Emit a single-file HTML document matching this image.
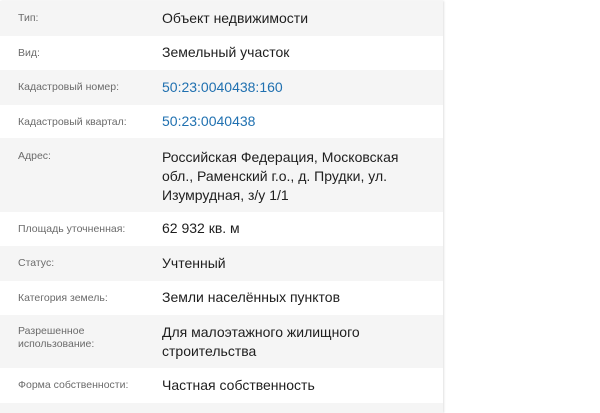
<!DOCTYPE html>
<html><head><meta charset="utf-8"><style>
body{margin:0;width:600px;height:410px;background:#fff;overflow:hidden;font-family:"Liberation Sans","DejaVu Sans",sans-serif}
.wrap{position:absolute;left:0;top:1px;width:443px;box-shadow:1px 0 2px rgba(0,0,0,.12)}
.r{position:relative;box-sizing:border-box}
.g{background:#f5f5f5}
.l{position:absolute;left:18px;font-size:10.5px;color:#6b6b6b;line-height:13px;white-space:nowrap}
.v{position:absolute;left:162px;font-size:14px;color:#1e1e1e;line-height:19px;width:275px;white-space:nowrap}
a{color:#1f70b0;text-decoration:none}
</style></head><body>
<div class="wrap">
<div class="r g" style="height:35px"><div class="l" style="top:11px">Тип:</div><div class="v" style="top:8px">Объект недвижимости</div></div>
<div class="r" style="height:34px"><div class="l" style="top:11px">Вид:</div><div class="v" style="top:7px">Земельный участок</div></div>
<div class="r g" style="height:35px"><div class="l" style="top:11px">Кадастровый номер:</div><div class="v" style="top:8px"><a>50:23:0040438:160</a></div></div>
<div class="r" style="height:33px"><div class="l" style="top:11px">Кадастровый квартал:</div><div class="v" style="top:7px"><a>50:23:0040438</a></div></div>
<div class="r g" style="height:74px"><div class="l" style="top:12px">Адрес:</div><div class="v" style="top:10px">Российская Федерация, Московская<br>обл., Раменский г.о., д. Прудки, ул.<br>Изумрудная, з/у 1/1</div></div>
<div class="r" style="height:34px"><div class="l" style="top:11px">Площадь уточненная:</div><div class="v" style="top:7px">62 932 кв. м</div></div>
<div class="r g" style="height:35px"><div class="l" style="top:11px">Статус:</div><div class="v" style="top:8px">Учтенный</div></div>
<div class="r" style="height:34px"><div class="l" style="top:11px">Категория земель:</div><div class="v" style="top:7px">Земли населённых пунктов</div></div>
<div class="r g" style="height:53px"><div class="l" style="top:10px">Разрешенное<br>использование:</div><div class="v" style="top:8px">Для малоэтажного жилищного<br>строительства</div></div>
<div class="r" style="height:35px"><div class="l" style="top:11px">Форма собственности:</div><div class="v" style="top:8px">Частная собственность</div></div>
<div class="r g" style="height:10px"></div>
</div>
</body></html>
